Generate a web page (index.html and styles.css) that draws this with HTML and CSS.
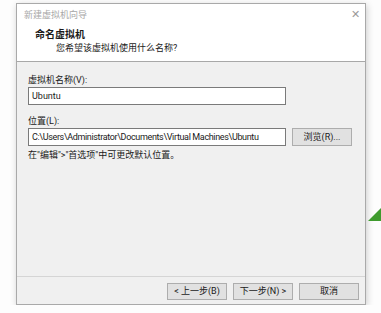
FILE: index.html
```html
<!DOCTYPE html>
<html>
<head>
    <title>新建虚拟机向导</title>
    <link rel="stylesheet" href="styles.css">
</head>
<body>

<div class="dialog">
    <div class="titlebar">
        <span class="caption">新建虚拟机向导</span>
        <span class="close">✕</span>
    </div>

    <div class="header">
        <div class="heading">命名虚拟机</div>
        <div class="subheading">您希望该虚拟机使用什么名称?</div>
    </div>

    <div class="body">
        <div class="label">虚拟机名称(V):</div>
        <div class="row">
            <div class="field name">Ubuntu</div>
        </div>

        <div class="label second">位置(L):</div>
        <div class="row">
            <div class="field path">C:\Users\Administrator\Documents\Virtual Machines\Ubuntu</div>
            <div class="button browse">浏览(R)...</div>
        </div>
        <div class="note">在"编辑"&gt;"首选项"中可更改默认位置。</div>
    </div>

    <div class="footer">
        <div class="button">&lt; 上一步(B)</div>
        <div class="button">下一步(N) &gt;</div>
        <div class="button">取消</div>
    </div>
</div>

<div class="corner"></div>

</body>
</html>
```

FILE: styles.css
```css
body {
    font-family: Roboto, "Noto Sans CJK SC", sans-serif;
    font-size: 9px;
    color: #1a1a1a;
    background-color: #fdfdfd;
    margin: 0;
    padding: 3px 0 0 16px;
}

.dialog {
    width: 348px;
    height: 300px;
    border: 1px solid #a9a9a9;
    background-color: #f0f0f0;
    box-shadow: 1px 2px 7px rgba(0, 0, 0, 0.2);
    display: flex;
    flex-direction: column;
}

.titlebar {
    height: 21px;
    background-color: #fff;
    display: flex;
    align-items: center;
    justify-content: space-between;
    padding: 0 5px 0 7px;
}

.caption {
    color: #a8a8a8;
}

.close {
    color: #9a9a9a;
    font-size: 11px;
}

.header {
    height: 37px;
    background-color: #fff;
    border-bottom: 1px solid #a8a8a8;
    padding-left: 18px;
    box-sizing: border-box;
}

.heading {
    font-weight: bold;
    font-size: 10px;
    line-height: 15px;
    padding-top: 2px;
}

.subheading {
    line-height: 13px;
    padding-left: 21px;
}

.body {
    flex-grow: 1;
    padding: 11px 13px 0 11px;
}

.label {
    line-height: 14px;
}

.label.second {
    margin-top: 9px;
}

.row {
    display: flex;
    gap: 6px;
}

.field {
    width: 258px;
    height: 18px;
    box-sizing: border-box;
    border: 1px solid #7a7a7a;
    background-color: #fff;
    padding-left: 3px;
    line-height: 16px;
    white-space: nowrap;
    overflow: hidden;
}

.path {
    letter-spacing: -0.35px;
}

.button {
    width: 60px;
    height: 17px;
    box-sizing: border-box;
    border: 1px solid #adadad;
    background-color: #e1e1e1;
    text-align: center;
    line-height: 15px;
}

.browse {
    height: 18px;
    line-height: 16px;
}

.note {
    margin-top: 2px;
    line-height: 14px;
}

.footer {
    height: 28px;
    border-top: 1px solid #d5d5d5;
    display: flex;
    justify-content: flex-end;
    gap: 6px;
    padding: 6px 6px 0 0;
    box-sizing: border-box;
}

.corner {
    position: absolute;
    top: 208px;
    left: 368px;
    width: 0;
    height: 0;
    border-left: 13px solid transparent;
    border-bottom: 13px solid #3f9b2e;
}
```
